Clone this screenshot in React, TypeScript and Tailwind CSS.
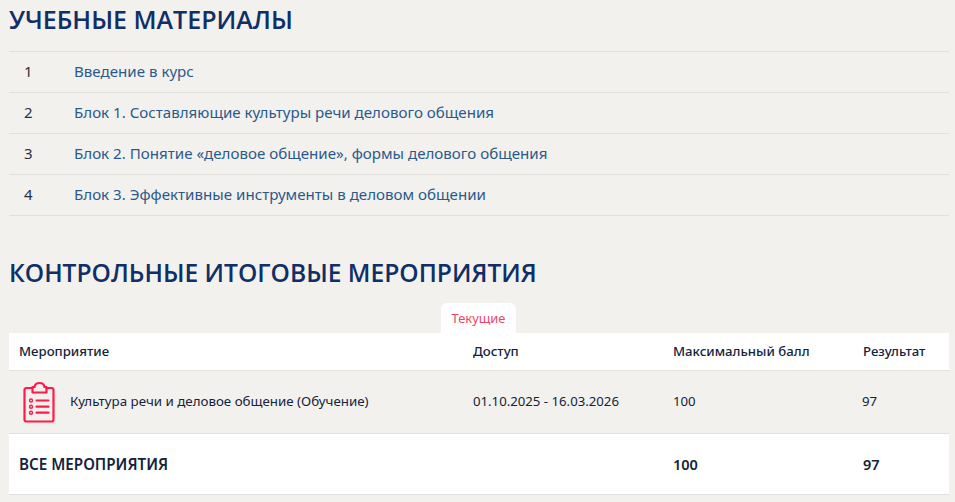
const materials = [
  "Введение в курс",
  "Блок 1. Составляющие культуры речи делового общения",
  "Блок 2. Понятие «деловое общение», формы делового общения",
  "Блок 3. Эффективные инструменты в деловом общении",
];

const ClipboardIcon = () => (
  <svg width="32" height="42" viewBox="0 0 32 42" fill="none" stroke="#ff1a4b" strokeWidth="2.2" strokeLinecap="round" strokeLinejoin="round">
    <path d="M9.500 7H3.500Q1.500 7 1.500 9V38.500Q1.500 40.500 3.500 40.500H28.500Q30.500 40.500 30.500 38.500V9Q30.500 7 28.500 7H23.500" />
    <path d="M9.500 11.500V6H11.500Q12 2 16.500 2Q21 2 21.500 6H23.500V11.500Z" />
    <circle cx="8" cy="19.500" r="1.500" strokeWidth="1.400" />
    <circle cx="8" cy="25.700" r="1.500" strokeWidth="1.400" />
    <circle cx="8" cy="31.700" r="1.500" strokeWidth="1.400" />
    <path d="M13.500 19.500H25.500M13.500 25.700H25.500M13.500 31.700H25.500" />
  </svg>
);

export default function App() {
  return (
    <div className="w-[955px] h-[502px] overflow-hidden bg-[#f3f1ee] pl-[9px] pr-[6px] font-['Noto_Sans','Open_Sans',sans-serif]">
      <h2 className="h-[51px] pt-[2px] text-[25px] leading-[34px] font-semibold text-[#0f2f66] font-['Open_Sans',sans-serif]">
        УЧЕБНЫЕ МАТЕРИАЛЫ
      </h2>

      {/* Materials */}
      <div className="border-t border-[#e2e0dc]">
        {materials.map((title, i) => (
          <div key={title} className="flex h-[41px] items-center border-b border-[#e2e0dc] pb-[2px] text-[15.12px]">
            <span className="w-[65px] pl-[15px] text-[15px] text-[#2a3040]">{i + 1}</span>
            <span className="text-[#2a5a8c]">{title}</span>
          </div>
        ))}
      </div>

      <h2 className="mt-[40px] h-[34px] text-[24.6px] leading-[34px] font-semibold text-[#0f2f66] font-['Open_Sans',sans-serif]">
        КОНТРОЛЬНЫЕ ИТОГОВЫЕ МЕРОПРИЯТИЯ
      </h2>

      {/* Tab */}
      <div className="mt-[13px] flex justify-center pr-px">
        <div className="flex h-[30px] w-[75px] items-center justify-center rounded-t-[6px] bg-white pt-px text-[12.9px] text-[#f0446a]">
          Текущие
        </div>
      </div>

      {/* Table */}
      <div className="text-[13.2px] text-[#14233c]">
        <div className="flex h-[38px] items-center border-b border-[#e2e0dc] bg-white pl-[10px] text-[13.2px] font-medium">
          <span className="w-[454px]">Мероприятие</span>
          <span className="w-[200px]">Доступ</span>
          <span className="w-[190px]">Максимальный балл</span>
          <span>Результат</span>
        </div>
        <div className="flex h-[63px] items-center border-b border-[#e2e0dc]">
          <div className="flex w-[464px] items-center pl-[14px]">
            <ClipboardIcon />
            <span className="ml-[15px] text-[13.33px]">Культура речи и деловое общение (Обучение)</span>
          </div>
          <span className="w-[200px]">01.10.2025 - 16.03.2026</span>
          <span className="w-[189px]">100</span>
          <span>97</span>
        </div>
        <div className="flex h-[61px] items-center border-b border-[#e2e0dc] bg-white pl-[10px] pt-px text-[14.5px] font-semibold">
          <span className="w-[654px] text-[15.2px]">ВСЕ МЕРОПРИЯТИЯ</span>
          <span className="w-[190px]">100</span>
          <span>97</span>
        </div>
      </div>
    </div>
  );
}
